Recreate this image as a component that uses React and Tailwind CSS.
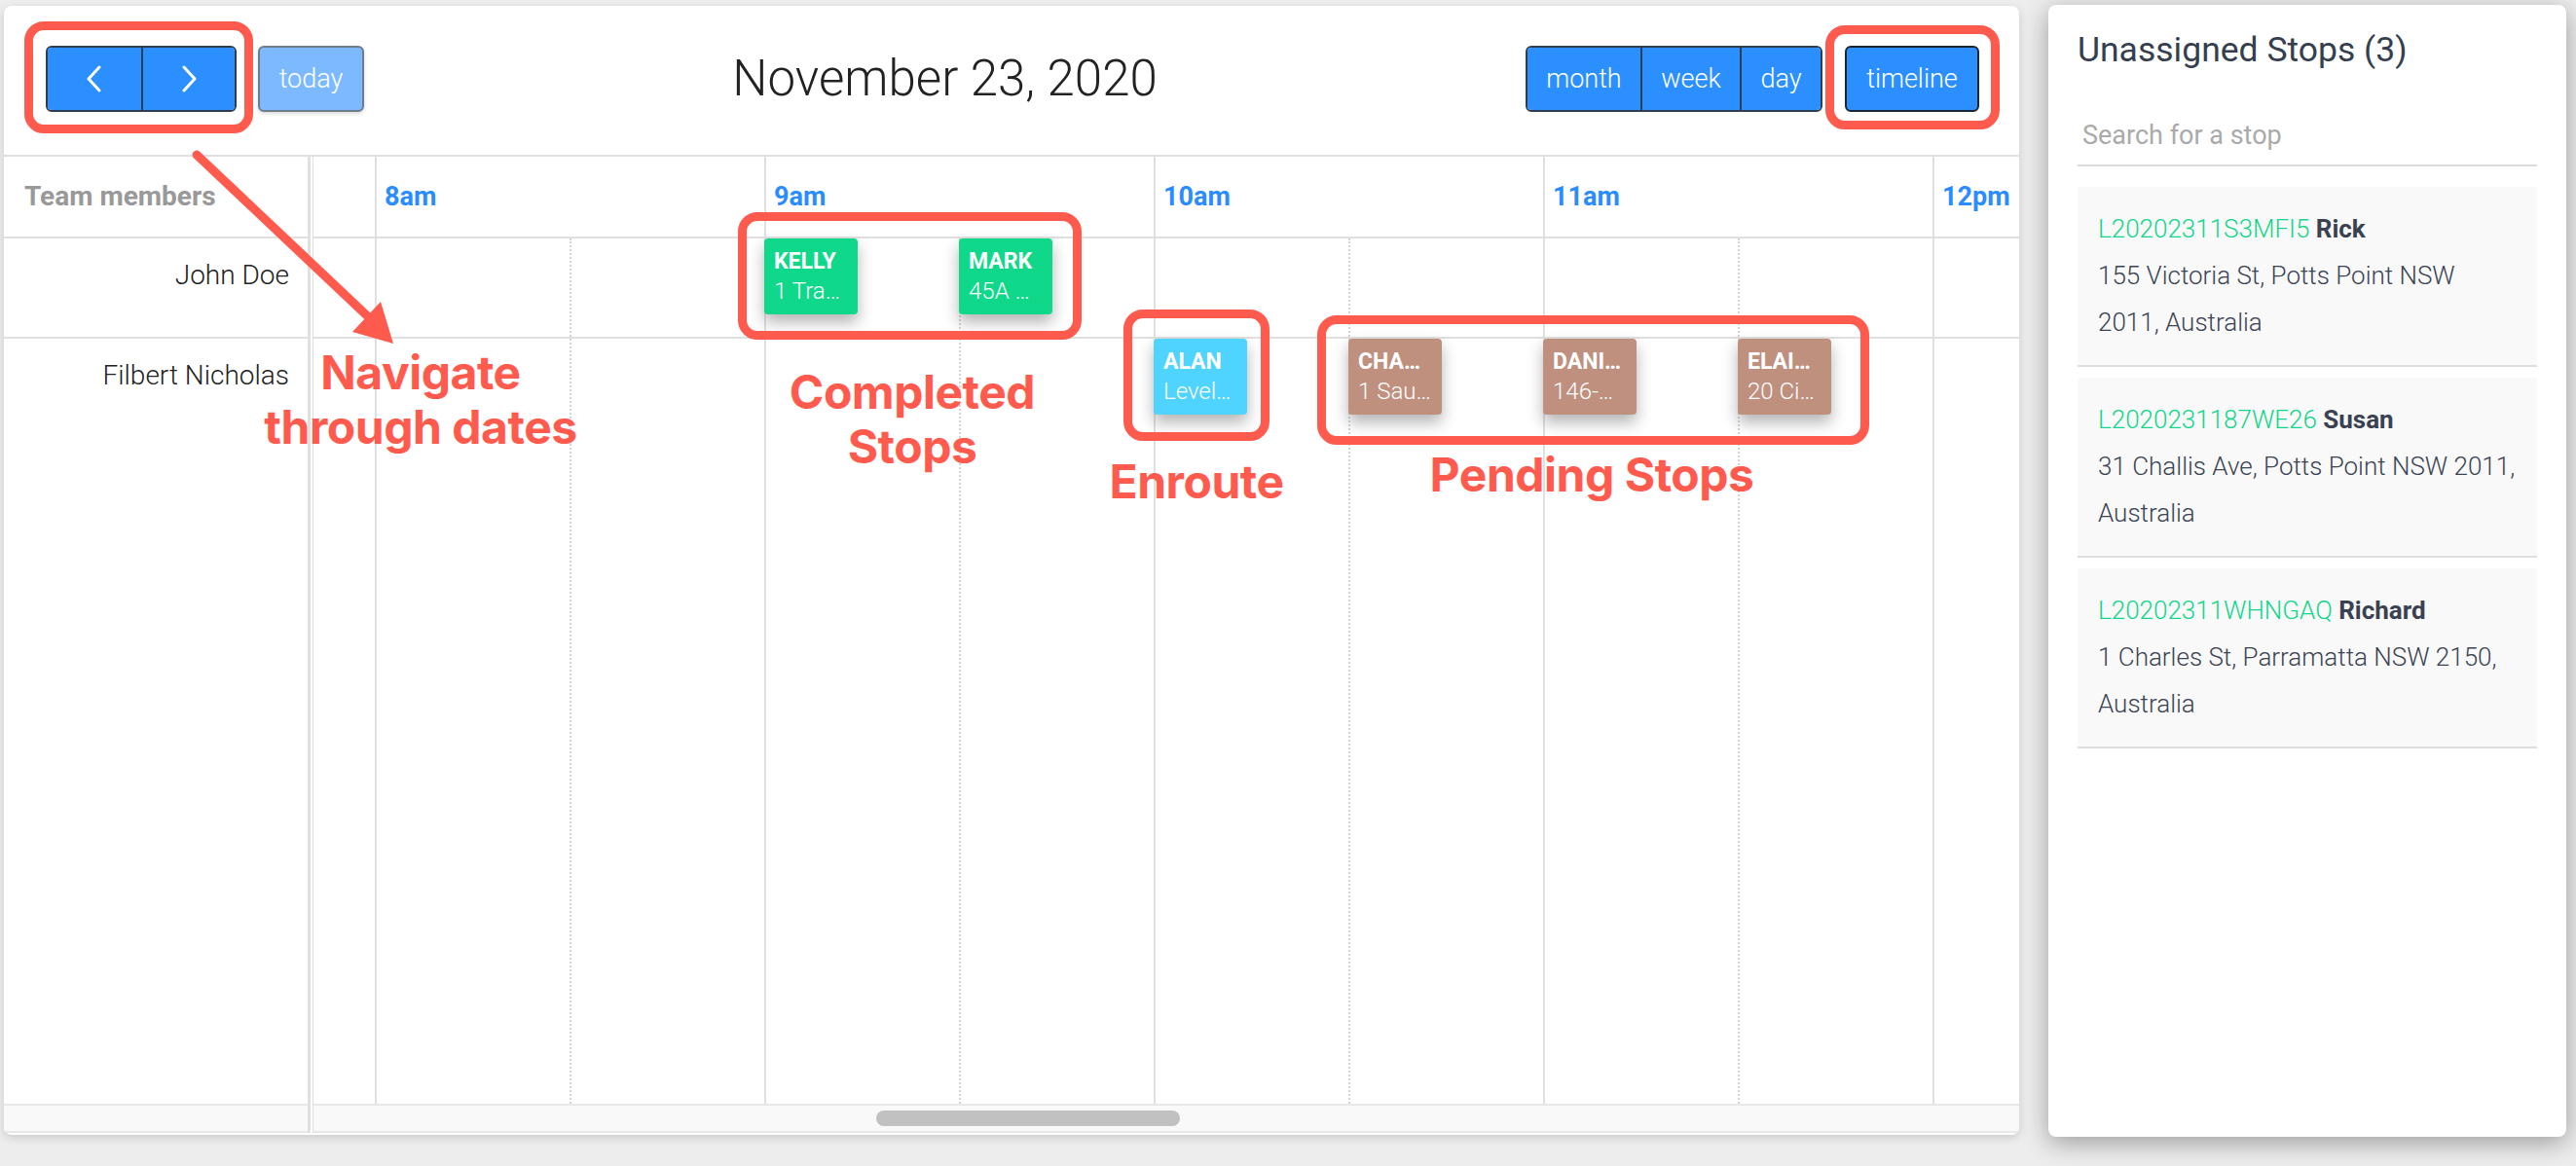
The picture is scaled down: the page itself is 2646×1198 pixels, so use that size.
import React from 'react';

const hours = ['8am', '9am', '10am', '11am', '12pm'];

const stops = [
  { id: 'L20202311S3MFI5', name: 'Rick', address: '155 Victoria St, Potts Point NSW 2011, Australia' },
  { id: 'L2020231187WE26', name: 'Susan', address: '31 Challis Ave, Potts Point NSW 2011, Australia' },
  { id: 'L20202311WHNGAQ', name: 'Richard', address: '1 Charles St, Parramatta NSW 2150, Australia' },
];

const completed = 'bg-[#0fd88b]';
const enroute = 'bg-[#4fd3ff]';
const pending = 'bg-[#c0907f]';

// slot index -> event (slot 0 = 7:30, every slot is 30 minutes)
const rows = [
  {
    name: 'John Doe',
    height: 'h-[103px]',
    events: {
      3: { title: 'KELLY', sub: '1 Tra…', color: completed },
      4: { title: 'MARK', sub: '45A …', color: completed },
    },
  },
  {
    name: 'Filbert Nicholas',
    height: 'flex-1',
    events: {
      5: { title: 'ALAN', sub: 'Level…', color: enroute },
      6: { title: 'CHA…', sub: '1 Sau…', color: pending },
      7: { title: 'DANI…', sub: '146-…', color: pending },
      8: { title: 'ELAI…', sub: '20 Ci…', color: pending },
    },
  },
];

const slots = Array.from({ length: 10 }, (_, i) => i);

function Chevron({ dir }) {
  return (
    <svg width="18" height="28" viewBox="0 0 18 28" fill="none">
      <polyline
        points={dir === 'left' ? '14,2 3,14 14,26' : '4,2 15,14 4,26'}
        stroke="white"
        strokeWidth="3"
        strokeLinecap="round"
        strokeLinejoin="round"
      />
    </svg>
  );
}

function EventCard({ ev }) {
  return (
    <div className={`-ml-[2px] w-[96px] h-[78px] rounded-[4px] px-[10px] pt-[9px] text-white shadow-[0_8px_16px_rgba(0,0,0,0.3)] ${ev.color}`}>
      <div className="text-[23px] leading-[30px] font-bold whitespace-nowrap overflow-hidden">{ev.title}</div>
      <div className="text-[24px] leading-[30px] font-light whitespace-nowrap overflow-hidden">{ev.sub}</div>
    </div>
  );
}

function Toolbar() {
  return (
    <div className="h-[155px] shrink-0 border-b-2 border-[#e0e0e0] flex justify-between items-start pt-[41px] pl-[43px] pr-[41px]">
      <div className="flex items-start gap-[22px]">
        <div className="flex h-[68px] rounded-[6px] border-2 border-[#2c3e50] overflow-hidden">
          <button className="w-[96px] h-full bg-[#2b8fff] flex items-center justify-center">
            <Chevron dir="left" />
          </button>
          <button className="w-[96px] h-full bg-[#2b8fff] border-l-2 border-[#2c3e50] flex items-center justify-center">
            <Chevron dir="right" />
          </button>
        </div>
        <button className="w-[109px] h-[68px] rounded-[6px] border-2 border-[#6f7c8b] bg-[#7cb9ff] text-white text-[27px] font-light shadow-[0_2px_4px_rgba(0,0,0,0.15)]">
          today
        </button>
      </div>

      <h2 className="mt-[4px] text-[51px] leading-[60px] font-light text-[#222]">
        November 23, 2020
      </h2>

      <div className="flex items-start gap-[23px]">
        <div className="flex h-[68px] rounded-[6px] border-2 border-[#2c3e50] overflow-hidden text-white text-[27px] font-light">
          <button className="w-[116px] bg-[#2b8fff]">month</button>
          <button className="w-[102px] bg-[#2b8fff] border-l-2 border-[#2c3e50]">week</button>
          <button className="w-[83px] bg-[#2b8fff] border-l-2 border-[#2c3e50]">day</button>
        </div>
        <button className="w-[138px] h-[68px] rounded-[6px] border-2 border-[#1a2633] bg-[#2b8fff] text-white text-[27px] font-light">
          timeline
        </button>
      </div>
    </div>
  );
}

function ScrollStrip({ children }) {
  return (
    <div className="h-[30px] shrink-0 border-y-2 border-[#e8e8e8] bg-[#f9f9f9] flex items-center">
      {children}
    </div>
  );
}

function Timeline() {
  return (
    <div className="flex-1 min-w-0 flex flex-col">
      <div className="flex-1 min-h-0 overflow-hidden">
        <div className="ml-[-137px] w-[2000px] h-full flex flex-col">
          <div className="h-[84px] shrink-0 border-b-2 border-[#e0e0e0] flex">
            <div className="w-[200px] shrink-0" />
            {hours.map((h) => (
              <div key={h} className="w-[400px] shrink-0 border-l-2 border-[#e0e0e0] flex items-center pl-[8px]">
                <span className="text-[27px] font-bold text-[#2b8cff]">{h}</span>
              </div>
            ))}
          </div>
          {rows.map((row) => (
            <div key={row.name} className={`${row.height} shrink-0 flex ${row.height === 'flex-1' ? '' : 'border-b-2 border-[#e0e0e0]'}`}>
              {slots.map((i) => (
                <div
                  key={i}
                  className={`w-[200px] shrink-0 border-l-2 ${
                    i % 2 === 1 ? 'border-solid border-[#e0e0e0]' : 'border-dotted border-[#d4d4d4]'
                  }`}
                >
                  {row.events[i] && <EventCard ev={row.events[i]} />}
                </div>
              ))}
            </div>
          ))}
        </div>
      </div>
      <ScrollStrip>
        <div className="ml-[578px] w-[312px] h-[16px] rounded-full bg-[#c1c1c1]" />
      </ScrollStrip>
    </div>
  );
}

function Members() {
  return (
    <div className="w-[312px] shrink-0 flex flex-col">
      <div className="h-[84px] shrink-0 border-b-2 border-[#e0e0e0] flex items-center pl-[21px]">
        <span className="text-[28px] font-bold text-[#999]">Team members</span>
      </div>
      {rows.map((row) => (
        <div
          key={row.name}
          className={`${row.height} shrink-0 text-right pr-[19px] pt-[18px] text-[28px] leading-[40px] font-light text-[#222] ${
            row.height === 'flex-1' ? '' : 'border-b-2 border-[#e0e0e0]'
          }`}
        >
          {row.name}
        </div>
      ))}
      <ScrollStrip />
    </div>
  );
}

function StopsPanel() {
  return (
    <aside className="ml-[30px] mt-[5px] w-[532px] h-[1163px] bg-white rounded-[8px] shadow-[0_6px_26px_rgba(0,0,0,0.35)] px-[30px] pt-[25px]">
      <h3 className="text-[35.5px] leading-[42px] text-[#353f4f]">Unassigned Stops (3)</h3>
      <input
        className="mt-[37px] w-full h-[62px] border-b-2 border-[#dcdcdc] pl-[5px] text-[27px] outline-none placeholder:text-[#aaaaaa]"
        placeholder="Search for a stop"
      />
      <div className="mt-[21px]">
        {stops.map((s) => (
          <div key={s.id} className="mb-[11px] bg-[#f9f9f9] border-b-2 border-[#dedede] pt-[19px] pb-[20px] pl-[21px] pr-[22px] text-[26px] leading-[48px] font-light text-[#3b4454]">
            <div>
              <span className="text-[#12d68b]">{s.id}</span>{' '}
              <span className="font-bold text-[#3a4252]">{s.name}</span>
            </div>
            <div>{s.address}</div>
          </div>
        ))}
      </div>
    </aside>
  );
}

function Annotations() {
  const box = 'absolute rounded-[20px] border-[9px] border-[#ff5a4e]';
  const label = 'absolute w-[400px] text-center text-[48px] leading-[56px] font-bold tracking-[-0.01em]';
  return (
    <div className="pointer-events-none absolute inset-0 font-['Inter',sans-serif] text-[#ff5a4e]">
      <div className={`${box} left-[25px] top-[22px] w-[235px] h-[115px]`} />
      <div className={`${box} left-[1875px] top-[26px] w-[179px] h-[107px]`} />
      <div className={`${box} left-[758px] top-[218px] w-[353px] h-[131px]`} />
      <div className={`${box} left-[1154px] top-[318px] w-[150px] h-[135px]`} />
      <div className={`${box} left-[1353px] top-[324px] w-[567px] h-[133px]`} />

      <svg className="absolute left-0 top-0" width="2646" height="1198" viewBox="0 0 2646 1198">
        <line x1="202" y1="159" x2="384" y2="331" stroke="#ff5a4e" strokeWidth="9" strokeLinecap="round" />
        <polygon points="404,353 362,341 391,310" fill="#ff5a4e" />
      </svg>

      <div className={`${label} left-[232px] top-[355px]`}>
        Navigate
        <br />
        through dates
      </div>
      <div className={`${label} left-[737px] top-[375px]`}>
        Completed
        <br />
        Stops
      </div>
      <div className={`${label} left-[1029px] top-[467px]`}>Enroute</div>
      <div className={`${label} left-[1435px] top-[460px]`}>Pending Stops</div>
    </div>
  );
}

export default function App() {
  return (
    <div className="relative w-[2646px] h-[1198px] overflow-hidden bg-[#ededed] font-['Roboto',sans-serif]">
      <div className="flex items-start pl-[4px]">
        <div className="mt-[6px] w-[2070px] h-[1160px] shrink-0 bg-white rounded-[8px] shadow-[0_3px_10px_rgba(0,0,0,0.15)] flex flex-col overflow-hidden pb-[2px]">
          <Toolbar />
          <div className="flex flex-1 min-h-0">
            <Members />
            <div className="w-[6px] shrink-0 border-l-[3px] border-r-[1px] border-[#e0e0e0] bg-white" />
            <Timeline />
          </div>
        </div>
        <StopsPanel />
      </div>
      <Annotations />
    </div>
  );
}
